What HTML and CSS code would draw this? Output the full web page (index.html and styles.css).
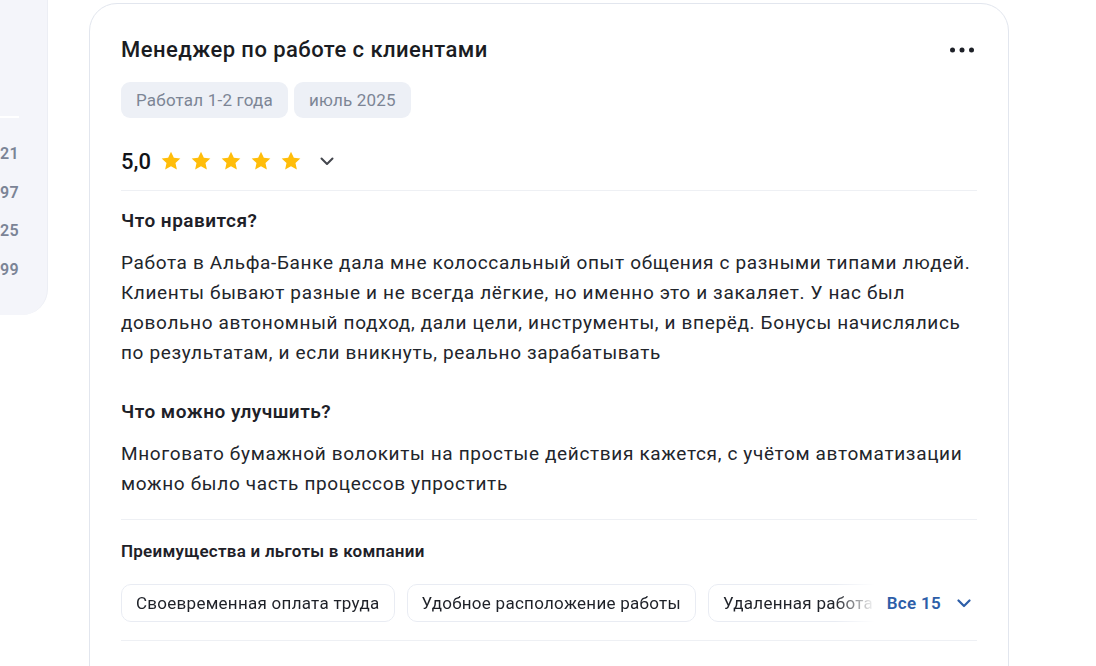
FILE: index.html
```html
<!DOCTYPE html>
<html lang="ru">
<head>
  <meta charset="UTF-8">
  <title>Отзыв</title>
  <link rel="stylesheet" href="styles.css">
</head>
<body>
  <div class="page">
    <aside class="side">
      <div class="side-line"></div>
      <ul class="side-list">
        <li>21</li>
        <li>97</li>
        <li>25</li>
        <li>99</li>
      </ul>
    </aside>

    <article class="review">
      <div class="review-head">
        <h1>Менеджер по работе с клиентами</h1>
        <button class="more" aria-label="Ещё">
          <svg width="24" height="8" viewBox="0 0 24 8"><circle cx="2.5" cy="4" r="2.5"/><circle cx="12" cy="4" r="2.5"/><circle cx="21.5" cy="4" r="2.5"/></svg>
        </button>
      </div>

      <div class="tags">
        <span class="tag">Работал 1-2 года</span>
        <span class="tag">июль 2025</span>
      </div>

      <div class="rating">
        <span class="score">5,0</span>
        <div class="stars">
          <svg viewBox="0 0 24 24"><path d="M12 1.8l3.1 6.6 7.1.8-5.3 4.9 1.5 7.1L12 17.6l-6.4 3.6 1.5-7.1L1.8 9.2l7.1-.8z"/></svg>
          <svg viewBox="0 0 24 24"><path d="M12 1.8l3.1 6.6 7.1.8-5.3 4.9 1.5 7.1L12 17.6l-6.4 3.6 1.5-7.1L1.8 9.2l7.1-.8z"/></svg>
          <svg viewBox="0 0 24 24"><path d="M12 1.8l3.1 6.6 7.1.8-5.3 4.9 1.5 7.1L12 17.6l-6.4 3.6 1.5-7.1L1.8 9.2l7.1-.8z"/></svg>
          <svg viewBox="0 0 24 24"><path d="M12 1.8l3.1 6.6 7.1.8-5.3 4.9 1.5 7.1L12 17.6l-6.4 3.6 1.5-7.1L1.8 9.2l7.1-.8z"/></svg>
          <svg viewBox="0 0 24 24"><path d="M12 1.8l3.1 6.6 7.1.8-5.3 4.9 1.5 7.1L12 17.6l-6.4 3.6 1.5-7.1L1.8 9.2l7.1-.8z"/></svg>
        </div>
        <svg class="chev" width="14" height="9" viewBox="0 0 14 9"><path d="M1.5 1.5L7 7l5.5-5.5"/></svg>
      </div>

      <div class="block">
        <h2>Что нравится?</h2>
        <p>Работа в Альфа-Банке дала мне колоссальный опыт общения с разными типами людей. Клиенты бывают разные и не всегда лёгкие, но именно это и закаляет. У нас был довольно автономный подход, дали цели, инструменты, и вперёд. Бонусы начислялись по результатам, и если вникнуть, реально зарабатывать</p>

        <h2 class="next">Что можно улучшить?</h2>
        <p>Многовато бумажной волокиты на простые действия кажется, с учётом автоматизации можно было часть процессов упростить</p>
      </div>

      <div class="benefits">
        <h3>Преимущества и льготы в компании</h3>
        <div class="benefit-row">
          <div class="benefit-list">
            <span class="benefit">Своевременная оплата труда</span>
            <span class="benefit">Удобное расположение работы</span>
            <span class="benefit">Удаленная работа</span>
          </div>
          <button class="all">Все 15
            <svg width="14" height="9" viewBox="0 0 14 9"><path d="M1.5 1.5L7 7l5.5-5.5"/></svg>
          </button>
        </div>
      </div>
    </article>
  </div>
</body>
</html>
```

FILE: styles.css
```css
body { margin: 0; font-family: Roboto, "Noto Sans", sans-serif; color: #1e2128; background: #fff; overflow: hidden; }
.page { display: flex; align-items: flex-start; }

.side { width: 47px; height: 315px; background: #f4f5fa; border-right: 1px solid #eceef4; border-bottom-right-radius: 26px; flex-shrink: 0; }
.side-line { width: 19px; height: 2px; background: #fff; margin-top: 116px; }
.side-list { list-style: none; margin: 17px 0 0; padding: 0 29px 0 0; text-align: right; }
.side-list li { font-size: 16px; font-weight: 600; color: #7b8496; line-height: 38.5px; letter-spacing: 0.3px; }

.review { flex-shrink: 0; margin: 3px 0 0 41px; width: 856px; padding: 32px 31px 60px 31px; border: 1px solid #e2e6ee; border-radius: 28px; }

.review-head { display: flex; justify-content: space-between; align-items: center; }
.review-head h1 { margin: 0; font-size: 22px; font-weight: 500; line-height: 28px; letter-spacing: 0.45px; color: #1a1c22; }
.more { border: none; background: none; padding: 0; margin-right: 3px; cursor: pointer; display: flex; }
.more svg { fill: #1e2128; }

.tags { display: flex; gap: 6px; margin-top: 18px; }
.tag { height: 36px; line-height: 36px; padding: 0 15px; border-radius: 9px; background: #edf0f6; color: #7c8595; font-size: 17px; letter-spacing: 0.2px; }

.rating { display: flex; align-items: center; margin-top: 29px; height: 28px; padding-bottom: 15px; border-bottom: 1px solid #eef0f4; }
.score { font-size: 22px; font-weight: 500; color: #111318; }
.stars { display: flex; gap: 8px; margin-left: 9px; }
.stars svg { width: 22px; height: 22px; fill: #ffbd0a; }
.chev { margin-left: 18px; fill: none; stroke: #43464d; stroke-width: 2; stroke-linecap: round; stroke-linejoin: round; }

.block { padding-top: 18px; padding-bottom: 20px; border-bottom: 1px solid #eef0f4; }
.block h2 { margin: 0; font-size: 19px; font-weight: 600; line-height: 24px; letter-spacing: 0.5px; color: #1e2128; }
.block h2.next { margin-top: 32px; }
.block p { margin: 15px 0 0; font-size: 19px; line-height: 30px; letter-spacing: 0.65px; color: #22252b; }

.benefits { padding-top: 20px; padding-bottom: 18px; border-bottom: 1px solid #eef0f4; }
.benefits h3 { margin: 0; font-size: 17px; font-weight: 600; line-height: 22px; letter-spacing: 0.25px; color: #1e2128; }
.benefit-row { display: flex; align-items: center; gap: 12px; margin-top: 22px; }
.benefit-list { flex: 1; display: flex; gap: 12px; overflow: hidden; white-space: nowrap; -webkit-mask-image: linear-gradient(to right, #000 calc(100% - 40px), transparent); mask-image: linear-gradient(to right, #000 calc(100% - 40px), transparent); }
.benefit { flex-shrink: 0; height: 36px; line-height: 36px; padding: 0 14px; border: 1px solid #e9ecf3; border-radius: 10px; font-size: 17px; letter-spacing: 0.27px; color: #1e2128; }
.all { display: flex; align-items: center; gap: 16px; border: none; background: none; padding: 0 6px 0 0; font-family: inherit; font-size: 17px; letter-spacing: 0.3px; font-weight: 600; color: #2d5ea8; cursor: pointer; }
.all svg { fill: none; stroke: #2d5ea8; stroke-width: 2.2; stroke-linecap: round; stroke-linejoin: round; }
```
